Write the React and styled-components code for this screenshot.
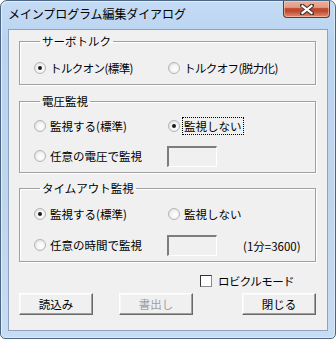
import React from "react";
import styled, { createGlobalStyle } from "styled-components";

const GlobalStyle = createGlobalStyle`
  html, body {
    margin: 0;
    padding: 0;
    background: #ffffff;
  }
  body {
    font-family: "Noto Sans CJK JP", "Liberation Sans", sans-serif;
  }
`;

const Window = styled.div`
  box-sizing: border-box;
  width: 336px;
  height: 339px;
  display: flex;
  flex-direction: column;
  border: 1px solid #4d6685;
  border-radius: 7px 7px 5px 5px;
  background: linear-gradient(180deg, #c4dbf4 0%, #bad4f0 12%, #c0d6ee 60%, #c8dcf2 100%);
  box-shadow: inset 1px 1px 0 #e3eefb, inset -1px -1px 0 #d9e7f7;
  overflow: hidden;
`;

const TitleBar = styled.div`
  height: 28px;
  display: flex;
  justify-content: space-between;
  align-items: flex-start;
  padding-left: 7px;
  padding-right: 5px;
`;

const Title = styled.div`
  margin-top: 5px;
  font-size: 12px;
  line-height: 16px;
  color: #000;
  letter-spacing: -0.1px;
`;

const CloseButton = styled.div`
  width: 47px;
  height: 17px;
  box-sizing: border-box;
  border: 1px solid #5b3a32;
  border-top: none;
  border-radius: 0 0 4px 4px;
  background: linear-gradient(
    180deg,
    #eab09b 0%,
    #e39c84 40%,
    #c0533a 45%,
    #b9472f 62%,
    #d2694c 80%,
    #e38a6a 100%
  );
  box-shadow: inset 0 0 0 1px rgba(255, 220, 200, 0.5);
  display: flex;
  align-items: center;
  justify-content: center;
`;

const Client = styled.div`
  flex: 1;
  margin: 0 7px 7px 7px;
  border: 1px solid #8ca2bf;
  background: #f0f0f0;
  padding: 4px 11px 0 10px;
  display: flex;
  flex-direction: column;
`;

const Group = styled.fieldset`
  margin: ${(p) => p.$top}px 0 0 0;
  padding: ${(p) => p.$pt}px 0 ${(p) => p.$pb}px 14px;
  border: 1px solid #a0a0a0;
  box-shadow: 1px 1px 0 #ffffff, inset 1px 1px 0 #ffffff;
  border-radius: 0;
  min-width: 0;
`;

const Legend = styled.legend`
  margin-left: 6px;
  padding: 0 2px;
  font-size: 11.5px;
  line-height: 14px;
  color: #000;
`;

const Row = styled.div`
  display: grid;
  grid-template-columns: 134px 1fr;
  align-items: center;
  height: 22px;
  margin-top: ${(p) => p.$gap || 0}px;
`;

const Option = styled.label`
  display: flex;
  align-items: center;
  gap: 4px;
  font-size: 11.5px;
  line-height: 14px;
  color: #000;
  white-space: nowrap;
`;

const Radio = styled.span`
  box-sizing: border-box;
  width: 12px;
  height: 12px;
  border-radius: 50%;
  border: 1px solid #b4b4b4;
  background: radial-gradient(circle at 60% 60%, #ffffff 0%, #f4f4f4 45%, #d4d4d4 100%);
  display: flex;
  align-items: center;
  justify-content: center;
  flex: none;
  &::after {
    content: "";
    width: 4px;
    height: 4px;
    border-radius: 50%;
    background: ${(p) => (p.$on ? "#1a1a1a" : "transparent")};
  }
`;

const Caption = styled.span`
  padding: 1px 1px;
  border: 1px dotted ${(p) => (p.$focus ? "#000" : "transparent")};
  margin-left: -2px;
  letter-spacing: ${(p) => (p.$tight ? "-0.6px" : "0")};
`;

const TextBox = styled.div`
  box-sizing: border-box;
  width: 50px;
  height: 21px;
  margin-left: -1px;
  border-top: 2px solid #7d7d7d;
  border-left: 2px solid #7d7d7d;
  border-right: 1px solid #ffffff;
  border-bottom: 1px solid #ffffff;
  background: #f0f0f0;
`;

const Extra = styled.div`
  display: flex;
  align-items: center;
  gap: 26px;
`;

const Note = styled.span`
  font-size: 11.5px;
  color: #000;
  margin-top: 2px;
`;

const CheckRow = styled.div`
  display: flex;
  align-items: center;
  gap: 6px;
  height: 16px;
  margin-top: 11px;
  padding-left: 181px;
  font-size: 11.5px;
  line-height: 14px;
  letter-spacing: -0.6px;
`;

const CheckBox = styled.span`
  box-sizing: border-box;
  width: 12px;
  height: 12px;
  border: 1px solid #333;
  border-right-color: #8a8a8a;
  border-bottom-color: #8a8a8a;
  background: #fff;
`;

const ButtonRow = styled.div`
  display: flex;
  margin-top: 4px;
`;

const Button = styled.div`
  box-sizing: border-box;
  width: 74px;
  height: 22px;
  margin-left: ${(p) => p.$ml || "0"};
  display: flex;
  align-items: center;
  justify-content: center;
  font-size: 11.5px;
  color: ${(p) => (p.disabled ? "#a0a0a0" : "#000")};
  background: #f0f0f0;
  border-top: 1px solid #ffffff;
  border-left: 1px solid #ffffff;
  border-right: 1px solid #696969;
  border-bottom: 1px solid #696969;
  box-shadow: inset -1px -1px 0 #a0a0a0, inset 1px 1px 0 #f8f8f8;
`;

const CloseIcon = () => (
  <svg width="14" height="11" viewBox="0 0 14 11">
    <path d="M2 1.5 L12 9.5 M12 1.5 L2 9.5" stroke="#4a3530" strokeWidth="4.2" strokeLinecap="square" />
    <path d="M2.5 2 L11.5 9 M11.5 2 L2.5 9" stroke="#ffffff" strokeWidth="2.2" strokeLinecap="square" />
  </svg>
);

const Choice = ({ on, focus, tight, children }) => (
  <Option>
    <Radio $on={on} />
    <Caption $focus={focus} $tight={tight}>
      {children}
    </Caption>
  </Option>
);

export default function App() {
  return (
    <>
      <GlobalStyle />
      <Window>
        <TitleBar>
          <Title>メインプログラム編集ダイアログ</Title>
          <CloseButton>
            <CloseIcon />
          </CloseButton>
        </TitleBar>
        <Client>
          <Group $top={0} $pt={9} $pb={5}>
            <Legend>サーボトルク</Legend>
            <Row>
              <Choice on tight>トルクオン(標準)</Choice>
              <Choice tight>トルクオフ(脱力化)</Choice>
            </Row>
          </Group>

          <Group $top={9} $pt={7} $pb={5}>
            <Legend>電圧監視</Legend>
            <Row>
              <Choice>監視する(標準)</Choice>
              <Choice on focus>監視しない</Choice>
            </Row>
            <Row $gap={8}>
              <Choice>任意の電圧で監視</Choice>
              <TextBox />
            </Row>
          </Group>

          <Group $top={8} $pt={8} $pb={5}>
            <Legend>タイムアウト監視</Legend>
            <Row>
              <Choice on>監視する(標準)</Choice>
              <Choice>監視しない</Choice>
            </Row>
            <Row $gap={9}>
              <Choice>任意の時間で監視</Choice>
              <Extra>
                <TextBox />
                <Note>(1分=3600)</Note>
              </Extra>
            </Row>
          </Group>

          <CheckRow>
            <CheckBox />
            <span>ロビクルモード</span>
          </CheckRow>

          <ButtonRow>
            <Button>読込み</Button>
            <Button $ml="26px" disabled>
              書出し
            </Button>
            <Button $ml="auto">閉じる</Button>
          </ButtonRow>
        </Client>
      </Window>
    </>
  );
}
